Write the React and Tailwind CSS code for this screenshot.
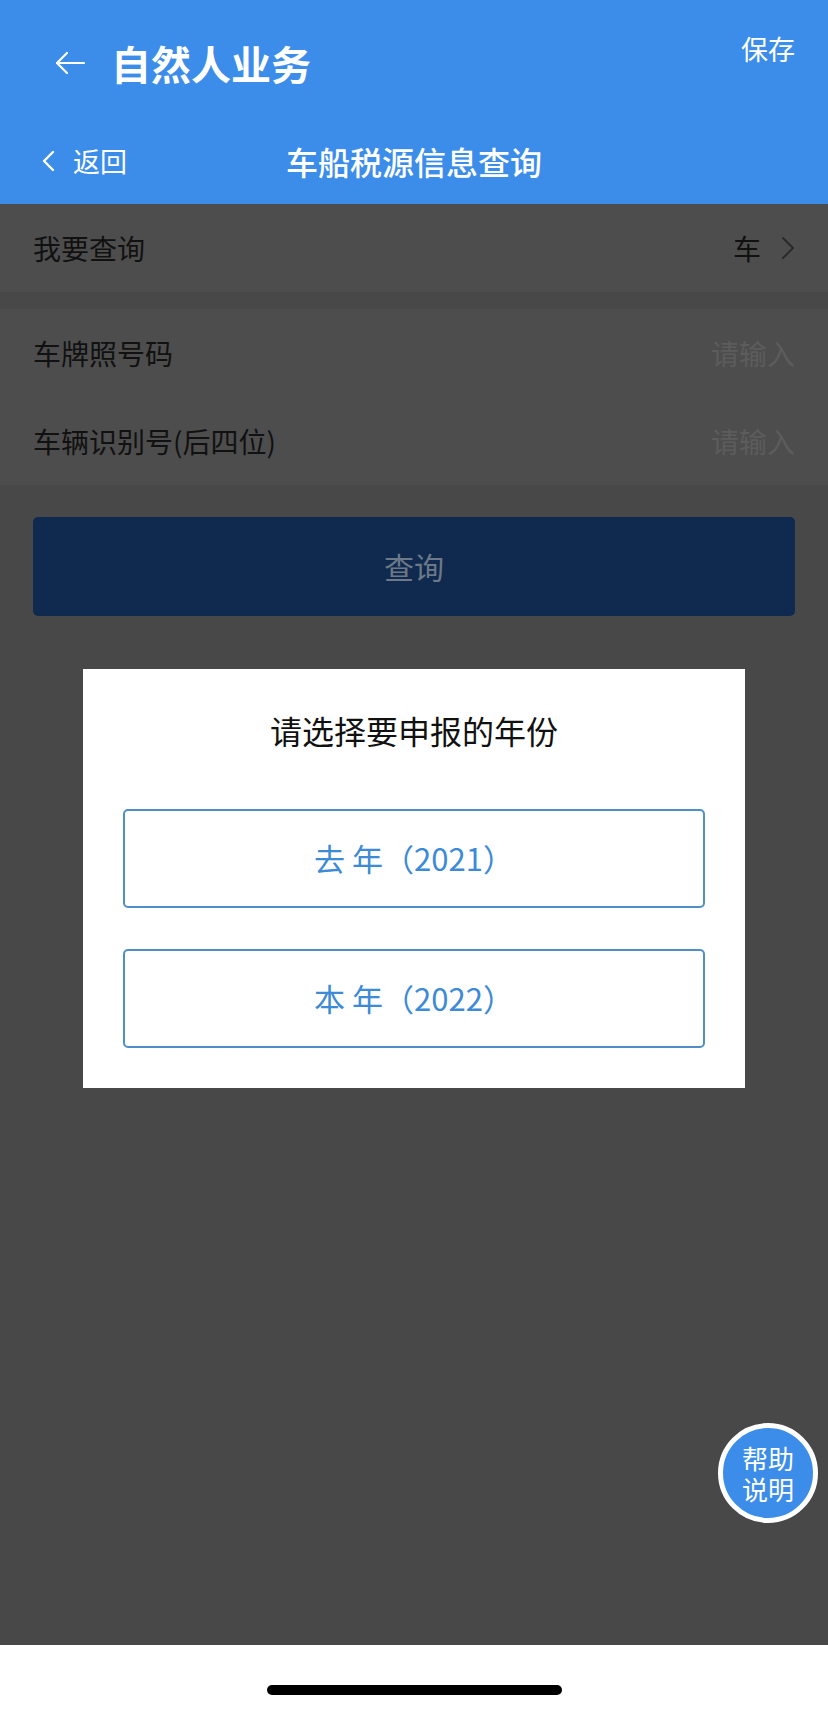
import React from "react";

const font = { fontFamily: '"Noto Sans CJK SC", "Noto Sans", sans-serif' };

const FormRow = ({ label, children }) => (
    <div className="h-[88px] px-[33px] flex items-center justify-between bg-[#4d4d4d]">
        <span className="text-[28px] text-[#111111]">{label}</span>
        {children}
    </div>
);

const YearButton = ({ label, year }) => (
    <button className="w-full h-[99px] border-2 border-[#4f8fc6] rounded-[5px] bg-white flex items-center justify-center text-[31px] text-[#3d8ad6]">
        <span>{label}</span>
        <span>（{year}）</span>
    </button>
);

const App = () => {
    return (
        <div style={font} className="relative w-[828px] h-[1711px] flex flex-col bg-white overflow-hidden">
            {/* header */}
            <div className="h-[204px] bg-[#3b8de9] text-white flex flex-col">
                <div className="h-[118px] flex justify-between">
                    <div className="flex items-center gap-[26px] pl-[55px] mt-[43px] h-[40px]">
                        <svg width="30" height="24" viewBox="0 0 30 24" fill="none" stroke="white" strokeWidth="2.2" strokeLinecap="round" strokeLinejoin="round">
                            <path d="M29 12H2" />
                            <path d="M12 2L2 12l10 10" />
                        </svg>
                        <span className="text-[40px] leading-[40px] font-bold">自然人业务</span>
                    </div>
                    <div className="pr-[33px] pt-[35px] text-[27px] leading-[28px]">保存</div>
                </div>
                <div className="h-[86px] grid grid-cols-[1fr_auto_1fr] items-center">
                    <div className="flex items-center gap-[18px] pl-[41px]">
                        <svg width="14" height="22" viewBox="0 0 14 22" fill="none" stroke="white" strokeWidth="2.4" strokeLinecap="round" strokeLinejoin="round">
                            <path d="M12 2L3 11l9 9" />
                        </svg>
                        <span className="text-[27px]">返回</span>
                    </div>
                    <div className="text-[32px] font-medium">车船税源信息查询</div>
                    <div />
                </div>
            </div>

            {/* body under overlay */}
            <div className="flex-1 bg-[#484848] flex flex-col">
                <FormRow label="我要查询">
                    <div className="flex items-center gap-[20px]">
                        <span className="text-[28px] text-[#111111]">车</span>
                        <svg width="14" height="24" viewBox="0 0 14 24" fill="none" stroke="#2a2a2a" strokeWidth="2" strokeLinecap="round" strokeLinejoin="round">
                            <path d="M2 2l10 10-10 10" />
                        </svg>
                    </div>
                </FormRow>
                <div className="h-[17px]" />
                <FormRow label="车牌照号码">
                    <span className="text-[28px] text-[#5c5c5c]">请输入</span>
                </FormRow>
                <FormRow label="车辆识别号(后四位)">
                    <span className="text-[28px] text-[#5c5c5c]">请输入</span>
                </FormRow>
                <div className="mx-[33px] mt-[32px] h-[99px] rounded-[5px] bg-[#0f2a4e] flex items-center justify-center text-[30px] text-[#6d7988]">
                    查询
                </div>
            </div>

            {/* home indicator area */}
            <div className="h-[66px] bg-white flex justify-center">
                <div className="mt-[40px] w-[295px] h-[10px] rounded-full bg-black" />
            </div>

            {/* modal */}
            <div className="absolute left-[83px] top-[669px] w-[662px] bg-white px-[40px] pt-[41px] pb-[40px]">
                <div className="h-[40px] text-center text-[32px] leading-[40px] text-[#111111]">请选择要申报的年份</div>
                <div className="mt-[59px] flex flex-col gap-[41px]">
                    <YearButton label="去 年" year="2021" />
                    <YearButton label="本 年" year="2022" />
                </div>
            </div>

            {/* help button */}
            <div className="absolute left-[718px] top-[1423px] w-[100px] h-[100px] rounded-full border-[5px] border-white bg-[#3b8de9] flex items-center justify-center text-white text-[26px] leading-[31px] text-center">
                <p>
                    帮助
                    <br />
                    说明
                </p>
            </div>
        </div>
    );
};

export default App;
